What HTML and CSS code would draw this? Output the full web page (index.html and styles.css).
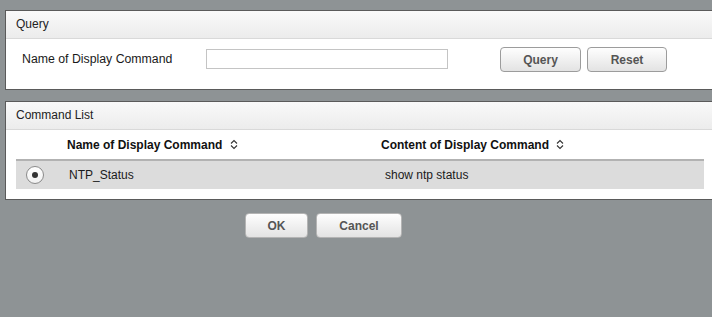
FILE: index.html
```html
<!DOCTYPE html>
<html lang="en">

<head>
    <meta charset="UTF-8">
    <meta name="viewport" content="width=device-width, initial-scale=1.0">
    <title>Display Command</title>
    <link rel="stylesheet" href="styles.css">
</head>

<body>
    <div class="panel">
        <div class="panel-title">Query</div>
        <div class="query-row">
            <label class="query-label" for="cmdName">Name of Display Command</label>
            <input class="query-input" id="cmdName" type="text">
            <div class="query-btns">
                <button class="btn btn-query">Query</button>
                <button class="btn btn-reset">Reset</button>
            </div>
        </div>
    </div>

    <div class="panel panel-list">
        <div class="panel-title">Command List</div>
        <table class="cmd-table">
            <thead>
                <tr>
                    <th class="col-radio"></th>
                    <th class="col-name">Name of Display Command
                        <svg class="sort" width="8" height="11" viewBox="0 0 8 11">
                            <path d="M1 4.5 L4 1.5 L7 4.5 M1 6.5 L4 9.5 L7 6.5" fill="none" stroke="#333" stroke-width="1.1"/>
                        </svg>
                    </th>
                    <th class="col-content">Content of Display Command
                        <svg class="sort" width="8" height="11" viewBox="0 0 8 11">
                            <path d="M1 4.5 L4 1.5 L7 4.5 M1 6.5 L4 9.5 L7 6.5" fill="none" stroke="#333" stroke-width="1.1"/>
                        </svg>
                    </th>
                </tr>
            </thead>
            <tbody>
                <tr class="selected">
                    <td class="col-radio"><span class="radio checked"></span></td>
                    <td class="col-name">NTP_Status</td>
                    <td class="col-content">show ntp status</td>
                </tr>
            </tbody>
        </table>
    </div>

    <div class="footer-btns">
        <button class="btn btn-ok">OK</button>
        <button class="btn btn-cancel">Cancel</button>
    </div>
</body>

</html>
```

FILE: styles.css
```css
* {
    margin: 0;
    padding: 0;
    box-sizing: border-box;
}

body {
    background-color: #8e9395;
    font-family: "Liberation Sans", Arial, sans-serif;
    font-size: 12px;
    color: #222;
    overflow: hidden;
    padding-top: 10px;
}

.panel {
    margin-left: 5px;
    margin-right: -20px;
    background-color: #fff;
    border: 1px solid #5a5a5a;
}

.panel-list {
    margin-top: 11px;
}

.panel-title {
    height: 28px;
    line-height: 27px;
    padding-left: 10px;
    font-size: 12px;
    color: #222;
    background: linear-gradient(#f9f9f9, #ececec);
    border-bottom: 1px solid #d9d9d9;
}

/* query area */
.query-row {
    height: 50px;
    padding: 8px 0 0 16px;
    display: flex;
    align-items: flex-start;
}

.query-label {
    width: 184px;
    height: 25px;
    line-height: 25px;
    font-size: 12.3px;
    color: #1a1a1a;
}

.query-input {
    width: 242px;
    height: 20px;
    margin-top: 2px;
    border: 1px solid #c4c4c4;
    background: #fff;
    outline: none;
}

.query-btns {
    display: flex;
    gap: 6px;
    margin-left: 52px;
}

.btn {
    height: 25px;
    font-family: "Liberation Sans", Arial, sans-serif;
    font-size: 12px;
    font-weight: bold;
    color: #555;
    background: linear-gradient(#fefefe, #e3e3e3);
    border: 1px solid #9c9c9c;
    border-radius: 4px;
    cursor: pointer;
}

.btn-query {
    width: 81px;
}

.btn-reset {
    width: 80px;
}

/* list */
.cmd-table {
    width: 688px;
    margin: 0 0 10px 10px;
    border-collapse: collapse;
    table-layout: fixed;
}

.cmd-table th {
    height: 30px;
    text-align: left;
    font-weight: bold;
    color: #111;
    border-bottom: 2px solid #b2b2b2;
    padding-top: 1px;
}

.cmd-table td {
    height: 29px;
    background-color: #dcdcdc;
    color: #1a1a1a;
}

.cmd-table .col-radio {
    width: 45px;
    padding-left: 10px;
}

.cmd-table .col-name {
    width: 314px;
}

.cmd-table th.col-name {
    padding-left: 6px;
}

.cmd-table td.col-name {
    padding-left: 8px;
}

.cmd-table th.col-content {
    padding-left: 6px;
}

.cmd-table td.col-content {
    padding-left: 10px;
}

.sort {
    vertical-align: -1px;
    margin-left: 4px;
}

.radio {
    display: block;
    width: 18px;
    height: 18px;
    border: 1px solid #8a8a8a;
    border-radius: 50%;
    background: linear-gradient(#ffffff, #f1f1f1);
    position: relative;
}

.radio.checked:after {
    content: "";
    position: absolute;
    left: 5px;
    top: 5px;
    width: 6px;
    height: 6px;
    border-radius: 50%;
    background-color: #333;
}

/* footer */
.footer-btns {
    display: flex;
    gap: 8px;
    margin: 13px 0 0 245px;
}

.btn-ok {
    width: 63px;
    border-color: #b4b4b4;
}

.btn-cancel {
    width: 86px;
    border-color: #b4b4b4;
}
```
